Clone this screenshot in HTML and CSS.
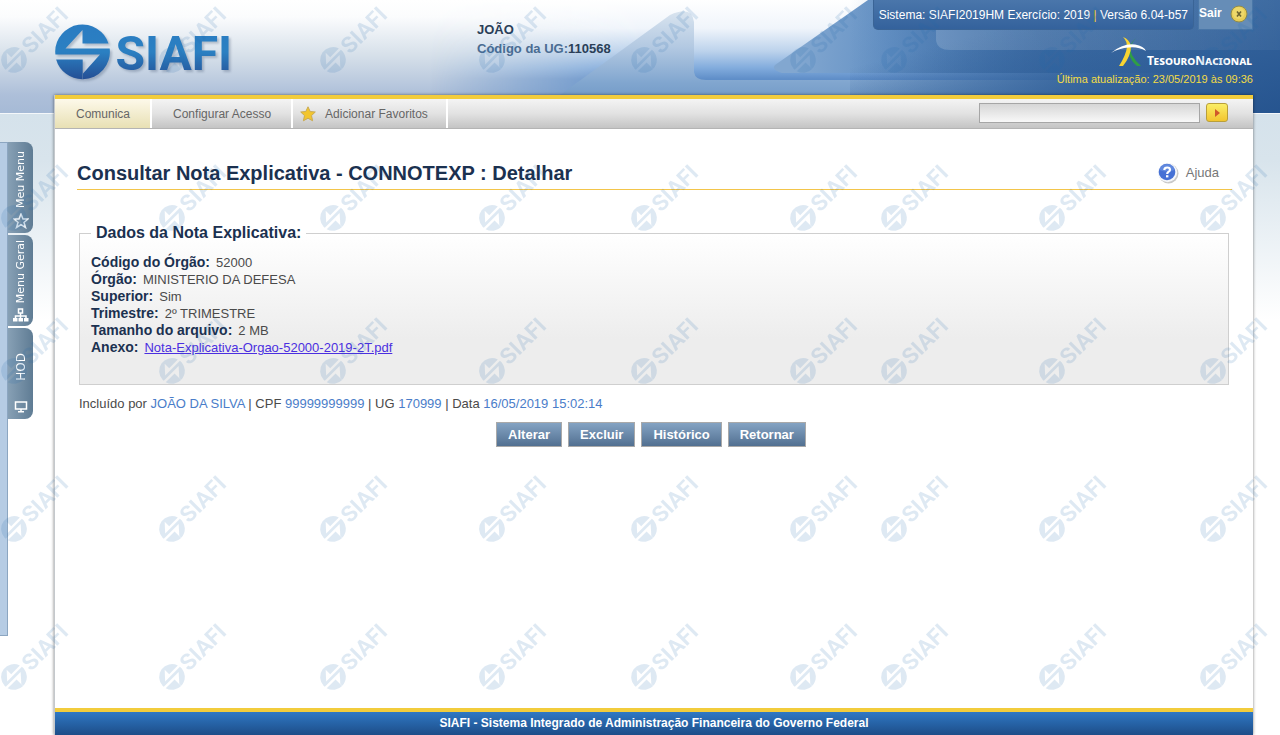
FILE: index.html
```html
<!DOCTYPE html>
<html lang="pt-BR">
<head>
<meta charset="utf-8">
<title>SIAFI - Consultar Nota Explicativa</title>
<link rel="stylesheet" href="styles.css">
</head>
<body>
<svg class="defs" width="0" height="0" aria-hidden="true">
  <defs>
    <linearGradient id="logoBlue" gradientUnits="userSpaceOnUse" x1="0" y1="-27" x2="0" y2="27">
      <stop offset="0" stop-color="#2a7cc2"/><stop offset=".5" stop-color="#2b80c2"/><stop offset="1" stop-color="#244f95"/>
    </linearGradient>
    <g id="mark">
      <path d="M-27.3 -.5A27.3 27.3 0 0 1 26 -8.500H0V-22L-17 -3.500H27.200A27.3 27.3 0 0 1 .5 27.200V21.500L17.500 2.500H-27.100ZM-26.400 7.500H.2V27.200A27.3 27.3 0 0 1 -26.400 7.500Z"/>
    </g>
    <g id="wm" transform="rotate(-45) scale(.47)">
      <use href="#mark"/>
      <text class="wordmark" x="33" y="18">SIAFI</text>
    </g>
  </defs>
</svg>

<div class="page">
  <svg class="sky" viewBox="0 0 1280 113" preserveAspectRatio="none" aria-hidden="true">
    <defs>
      <linearGradient id="base" x1="0" y1="0" x2="0" y2="1">
        <stop offset="0" stop-color="#fff"/><stop offset=".15" stop-color="#fbfcfd"/><stop offset=".5" stop-color="#d5dfe9"/><stop offset=".84" stop-color="#adbfd9"/><stop offset="1" stop-color="#a6bad6"/>
      </linearGradient>
      <linearGradient id="mid" x1="0" y1="0" x2="0" y2="1">
        <stop offset="0" stop-color="#fff"/><stop offset=".25" stop-color="#f0f5fb"/><stop offset=".45" stop-color="#bdd3ec"/><stop offset=".6" stop-color="#82acdd"/><stop offset=".7" stop-color="#5f8ec8"/><stop offset="1" stop-color="#5f8dc4"/>
      </linearGradient>
      <linearGradient id="fadeIn" x1="0" y1="0" x2="1" y2="0">
        <stop offset="0" stop-color="#000"/><stop offset=".25" stop-color="#fff"/><stop offset="1" stop-color="#fff"/>
      </linearGradient>
      <mask id="midMask"><rect x="430" width="850" height="113" fill="url(#fadeIn)"/></mask>
      <linearGradient id="peak" x1="0" y1="0" x2="0" y2="1">
        <stop offset="0" stop-color="#d9e4ef"/><stop offset=".35" stop-color="#b3c9e2"/><stop offset=".7" stop-color="#81a6cf"/><stop offset="1" stop-color="#6690c0"/>
      </linearGradient>
      <linearGradient id="right" gradientUnits="userSpaceOnUse" x1="800" y1="30" x2="1050" y2="60">
        <stop offset="0" stop-color="#82a7d0"/><stop offset=".35" stop-color="#6592c5"/><stop offset="1" stop-color="#3e6da6"/>
      </linearGradient>
      <linearGradient id="shade" x1="0" y1="0" x2="1" y2="0">
        <stop offset="0" stop-color="#3b6ba3" stop-opacity="0"/><stop offset=".55" stop-color="#3b6ba3" stop-opacity=".85"/><stop offset="1" stop-color="#3b6ba3"/>
      </linearGradient>
      <linearGradient id="deep" x1="0" y1="0" x2="1" y2="1">
        <stop offset=".3" stop-color="#24528d" stop-opacity="0"/><stop offset="1" stop-color="#24528d" stop-opacity=".9"/>
      </linearGradient>
      <linearGradient id="panelGloss" x1="0" y1="0" x2="1" y2="0">
        <stop offset="0" stop-color="#fff" stop-opacity=".16"/><stop offset="1" stop-color="#fff" stop-opacity=".04"/>
      </linearGradient>
    </defs>
    <rect width="1280" height="113" fill="url(#base)"/>
    <rect x="430" width="850" height="113" fill="url(#mid)" mask="url(#midMask)"/>
    <path d="M560 95L670 15Q692 5 694 22V72Q695 80 706 80H1280V113H560Z" fill="url(#peak)"/>
    <path d="M775 65L868 0H1280V73H782Q771 70 775 65Z" fill="url(#right)"/>
    <rect x="850" width="430" height="113" fill="url(#shade)"/>
    <rect x="850" width="430" height="113" fill="url(#deep)"/>
    <path d="M936 0V40Q937 50 950 50H1280V0Z" fill="url(#panelGloss)"/>
  </svg>

  <header class="top">
    <svg class="logo" width="182" height="60" viewBox="0 0 182 60" role="img" aria-label="SIAFI">
      <g transform="translate(28.500 30)" fill="url(#logoBlue)">
        <use href="#mark"/>
        <text class="wordmark" x="33" y="18">SIAFI</text>
      </g>
    </svg>
    <div class="user">
      <strong>JOÃO</strong>
      <div><span>Código da UG:</span><strong>110568</strong></div>
    </div>
    <div class="session">
      <div class="session-bar">
        <div class="system">Sistema: SIAFI2019HM Exercício: 2019 <i>|</i> Versão 6.04-b57</div>
        <a class="exit" href="#">Sair
          <svg width="18" height="18" viewBox="0 0 18 18" aria-hidden="true"><circle cx="9" cy="9" r="8" fill="#e6cd55" stroke="#8f8a4c"/><circle cx="8.500" cy="8" r="6" fill="#f2df78" opacity=".6"/><path d="M7 6.500l4 5M11 6.500l-4 5" stroke="#6d6531" stroke-width="1.600"/></svg>
        </a>
      </div>
      <div class="treasury">
        <svg width="36" height="30" viewBox="0 0 36 30" aria-hidden="true">
          <path d="M25 1Q17 9 21 18Q25 25 30 29H26Q20 24 18 17Q17 8 25 1Z" fill="#2f9e45"/>
          <path d="M12 0Q18 2 20 9Q20 19 12 29H8Q15 18 16 10Q16 4 12 0Z" fill="#f8d432"/>
          <path d="M0 16Q12 6 24 7.500Q33 9 35 14Q27 9.500 18 10.500Q8 11 0 16Z" fill="#fff"/>
        </svg>
        <span>TesouroNacional</span>
      </div>
      <div class="updated">Última atualização: 23/05/2019 às 09:36</div>
    </div>
  </header>

  <div class="body">
    <aside class="side">
      <div class="drawer"></div>
      <nav class="tabs">
        <button class="tab"><svg width="16" height="16" viewBox="0 0 16 16"><path d="M8 1L10 6H15L11 9.500L12.500 14.500L8 11.600L3.500 14.500L5 9.500L1 6H6Z" fill="none" stroke="#e8eef3" stroke-width="1.500"/></svg><span>Meu Menu</span></button>
        <button class="tab"><svg width="16" height="14" viewBox="0 0 16 14" fill="none" stroke="#fff"><rect x="5.500" y="1" width="4" height="4" stroke-width="1.500"/><path d="M7.500 5V11M2.500 11V8H13V11" stroke-width="1.500"/><path d="M0 10H4.500V13.500H0ZM5.500 10H10V13.500H5.500ZM11 10H15.500V13.500H11Z" fill="#fff" stroke="none"/></svg><span>Menu Geral</span></button>
        <button class="tab hod"><svg width="14" height="12" viewBox="0 0 14 12"><path d="M1.500 1H12.500V8H1.500ZM7 8V10.500M4 10.700H10" fill="none" stroke="#fff" stroke-width="1.500"/></svg><span>HOD</span></button>
      </nav>
    </aside>

    <div class="shell">
      <nav class="menu">
        <a class="active" href="#">Comunica</a>
        <a href="#">Configurar Acesso</a>
        <a class="fav" href="#"><svg width="16" height="16" viewBox="0 0 16 16" aria-hidden="true"><path d="M8 .8L10.200 5.500L15.300 6L11.500 9.600L12.600 14.800L8 12.200L3.400 14.800L4.500 9.600L.7 6L5.800 5.500Z" fill="#f2c52e" stroke="#c9ab55"/></svg>Adicionar Favoritos</a>
        <form class="search">
          <input type="text" aria-label="Pesquisar">
          <button type="button" aria-label="Ir"><svg width="5" height="8" viewBox="0 0 5 8"><path d="M0 0L5 4L0 8Z" fill="#d0592a"/></svg></button>
        </form>
      </nav>

      <main>
        <div class="heading">
          <h1>Consultar Nota Explicativa - CONNOTEXP : Detalhar</h1>
          <a class="help" href="#"><svg width="22" height="22" viewBox="0 0 22 22" aria-hidden="true"><circle cx="11.500" cy="11.500" r="10" fill="#c9c9c9"/><circle cx="10.500" cy="10.500" r="9.700" fill="#f4f6fa"/><circle cx="10" cy="10" r="8.300" fill="#4671d5"/><path d="M2.500 8Q4 2 10 2Q16 2 17.500 8Q10 11 2.500 8Z" fill="#7aa0e8" opacity=".5"/><path d="M7.200 8Q7.500 5.500 10.200 5.500Q13 5.500 13 7.800Q13 9.200 11.300 10Q10.200 10.600 10.200 12" fill="none" stroke="#fff" stroke-width="2.200"/><rect x="9" y="13.200" width="2.400" height="2.200" fill="#fff"/></svg>Ajuda</a>
        </div>

        <fieldset>
          <legend>Dados da Nota Explicativa:</legend>
          <dl>
            <div><dt>Código do Órgão:</dt><dd>52000</dd></div>
            <div><dt>Órgão:</dt><dd>MINISTERIO DA DEFESA</dd></div>
            <div><dt>Superior:</dt><dd>Sim</dd></div>
            <div><dt>Trimestre:</dt><dd>2º TRIMESTRE</dd></div>
            <div><dt>Tamanho do arquivo:</dt><dd>2 MB</dd></div>
            <div><dt>Anexo:</dt><dd><a href="#">Nota-Explicativa-Orgao-52000-2019-2T.pdf</a></dd></div>
          </dl>
        </fieldset>

        <p class="audit">Incluído por <span>JOÃO DA SILVA</span> | CPF <span>99999999999</span> | UG <span>170999</span> | Data <span>16/05/2019 15:02:14</span></p>

        <div class="actions">
          <button>Alterar</button>
          <button>Excluir</button>
          <button>Histórico</button>
          <button>Retornar</button>
        </div>
      </main>

      <footer>SIAFI - Sistema Integrado de Administração Financeira do Governo Federal</footer>
    </div>
  </div>

  <svg class="watermarks" aria-hidden="true">
    <defs>
      <g id="wmRow">
        <use href="#wm" transform="translate(14 0)"/>
        <use href="#wm" transform="translate(172 0)"/>
        <use href="#wm" transform="translate(333 0)"/>
        <use href="#wm" transform="translate(492 0)"/>
        <use href="#wm" transform="translate(644 0)"/>
        <use href="#wm" transform="translate(803 0)"/>
        <use href="#wm" transform="translate(894 0)"/>
        <use href="#wm" transform="translate(1052 0)"/>
        <use href="#wm" transform="translate(1213 0)"/>
      </g>
    </defs>
    <use href="#wmRow" y="60"/>
    <use href="#wmRow" y="218"/>
    <use href="#wmRow" y="371"/>
    <use href="#wmRow" y="529"/>
    <use href="#wmRow" y="677"/>
  </svg>
</div>
</body>
</html>
```

FILE: styles.css
```css
* { box-sizing: border-box; }
body {
  margin: 0;
  font-family: "Liberation Sans", Arial, sans-serif;
  font-size: 13px;
  color: #4a4a4a;
  background: #fff;
}
a { color: inherit; text-decoration: none; }
button { font-family: inherit; cursor: pointer; }
.defs { position: absolute; }

.page {
  position: relative;
  display: flex;
  flex-direction: column;
  min-height: 100vh;
  background: linear-gradient(#d5e2eb 114px, #d8e4ec 160px, #fff 320px);
}
.sky {
  position: absolute;
  top: 0;
  left: 0;
  width: 100%;
  height: 114px;
  border-bottom: 1px solid #f4f7fa;
}
.watermarks {
  position: absolute;
  inset: 0;
  width: 100%;
  height: 100%;
  fill: #1f68ac;
  opacity: .14;
  pointer-events: none;
}
.wordmark {
  font-family: Roboto, sans-serif;
  font-weight: 700;
  font-size: 48px;
}

.top {
  position: relative;
  display: grid;
  grid-template-columns: 423px 1fr auto;
  height: 95px;
  padding: 0 27px 0 54px;
}
.logo {
  margin-top: 22px;
  filter: drop-shadow(2px 2px 1px rgba(60, 80, 110, .3));
}
.user { padding-top: 20px; line-height: 19px; color: #2a3f58; }
.user span { color: #4a6c92; font-weight: bold; }
.session { display: flex; flex-direction: column; align-items: flex-end; color: #fff; }
.session-bar { display: flex; gap: 4px; font-size: 12px; }
.system {
  height: 30px;
  padding: 0 5px;
  line-height: 30px;
  background: linear-gradient(#4a76ab, #34629c);
  border: 1px solid #3a6496;
  border-top: 0;
  border-radius: 0 0 5px 5px;
}
.system i { font-style: normal; color: #f3c832; }
.exit {
  display: flex;
  justify-content: space-between;
  width: 55px;
  height: 30px;
  padding: 5px 4px 0 0;
  font-weight: bold;
  line-height: 16px;
  background: #668db7;
  border: 1px solid #4a77a8;
  border-top: 0;
}
.treasury {
  display: flex;
  align-items: flex-end;
  height: 40px;
  padding: 0 1px 3px 0;
  font-family: "Noto Sans", sans-serif;
  font-size: 12px;
  font-weight: bold;
  font-variant: small-caps;
  line-height: 12px;
}
.updated { line-height: 18px; font-size: 11px; color: #f3dc45; }

.body { position: relative; display: flex; flex: 1; padding-right: 27px; }
.side { display: flex; align-items: flex-start; width: 54px; padding-top: 47px; }
.drawer { width: 8px; height: 494px; background: #b6cce4; border: 1px solid #8ca6c1; border-left: 0; }
.tabs { display: flex; flex-direction: column; gap: 2px; }
.tab {
  display: flex;
  flex-direction: column-reverse;
  align-items: center;
  gap: 5px;
  width: 25px;
  height: 91px;
  padding: 0 0 4px;
  border: 0;
  border-radius: 0 8px 8px 0;
  background: linear-gradient(90deg, #87a0b5, #5f7c94);
  color: #fff;
  font-family: "DejaVu Sans", sans-serif;
  font-size: 11px;
  line-height: 14px;
}
.tab span { writing-mode: vertical-rl; transform: rotate(180deg); }
.tab.hod { gap: 20px; padding-bottom: 6px; font-size: 12px; }

.shell {
  display: flex;
  flex-direction: column;
  flex: 1;
  background: #fff;
  border-left: 1px solid #c4c8cc;
  box-shadow: 0 0 3px rgba(0, 0, 0, .5);
}
.menu {
  display: flex;
  height: 34px;
  border-top: 4px solid #f2cc3c;
  border-bottom: 1px solid #b4b4b4;
  background: linear-gradient(#f4f4f4, #e2e2e2 50%, #c4c4c4);
  font-size: 12px;
  line-height: 30px;
  color: #666;
}
.menu > a { padding: 0 20px 0 21px; border-right: 2px solid #fff; }
.menu > .active { background: linear-gradient(#fdf9ea, #e8e0b4); }
.menu > .fav { display: flex; align-items: center; gap: 9px; padding: 0 18px 0 7px; }
.search { display: flex; align-items: center; gap: 6px; margin: 0 25px 2px auto; }
.search input {
  width: 221px;
  height: 20px;
  border: 1px solid #a6a6a6;
  background: linear-gradient(#d6d6d6, #f8f8f8);
}
.search button {
  display: flex;
  align-items: center;
  justify-content: center;
  width: 22px;
  height: 19px;
  padding: 0;
  border: 1px solid #b99f3a;
  border-radius: 3px;
  background: linear-gradient(#fbee67, #f2c52f);
}

main { flex: 1; padding: 29px 24px 0; }
.heading {
  display: flex;
  justify-content: space-between;
  align-items: flex-start;
  height: 32px;
  margin: 0 -3px 0 -2px;
  padding: 0 13px 0 0;
  border-bottom: 1px solid #f3c54a;
}
h1 { margin: 0; font-size: 20px; line-height: 30px; color: #1b3150; }
.help { display: flex; align-items: center; gap: 7px; height: 29px; color: #777; }
fieldset {
  min-width: 0;
  margin: 34px 0 0;
  padding: 12px 11px 28px;
  border: 1px solid #cfcfcf;
  background: linear-gradient(#fff, #ededed 70%);
}
legend { padding: 0 5px; font-size: 16px; line-height: 18px; font-weight: bold; color: #1b3150; }
dl { margin: 0; }
dl div { display: flex; align-items: baseline; gap: 6px; line-height: 16px; }
dt { font-size: 14px; font-weight: bold; color: #1b3150; }
dd { margin: 0; }
dd a { color: #4b2fe0; text-decoration: underline; }
.audit { margin: 10px 0 9px; line-height: 18px; }
.audit span { color: #4a7dc9; }
.actions { display: flex; justify-content: center; gap: 6px; padding-right: 6px; }
.actions button {
  height: 25px;
  padding: 0 11px;
  border: 1px solid #a9a9a9;
  background: linear-gradient(#84a3c3, #527091);
  color: #fff;
  font-size: 13px;
  font-weight: bold;
}
footer {
  border-top: 4px solid #f2cc3c;
  background: linear-gradient(#2f78c4, #1d4d88);
  color: #fff;
  font-size: 12px;
  font-weight: bold;
  line-height: 23px;
  text-align: center;
}
```
